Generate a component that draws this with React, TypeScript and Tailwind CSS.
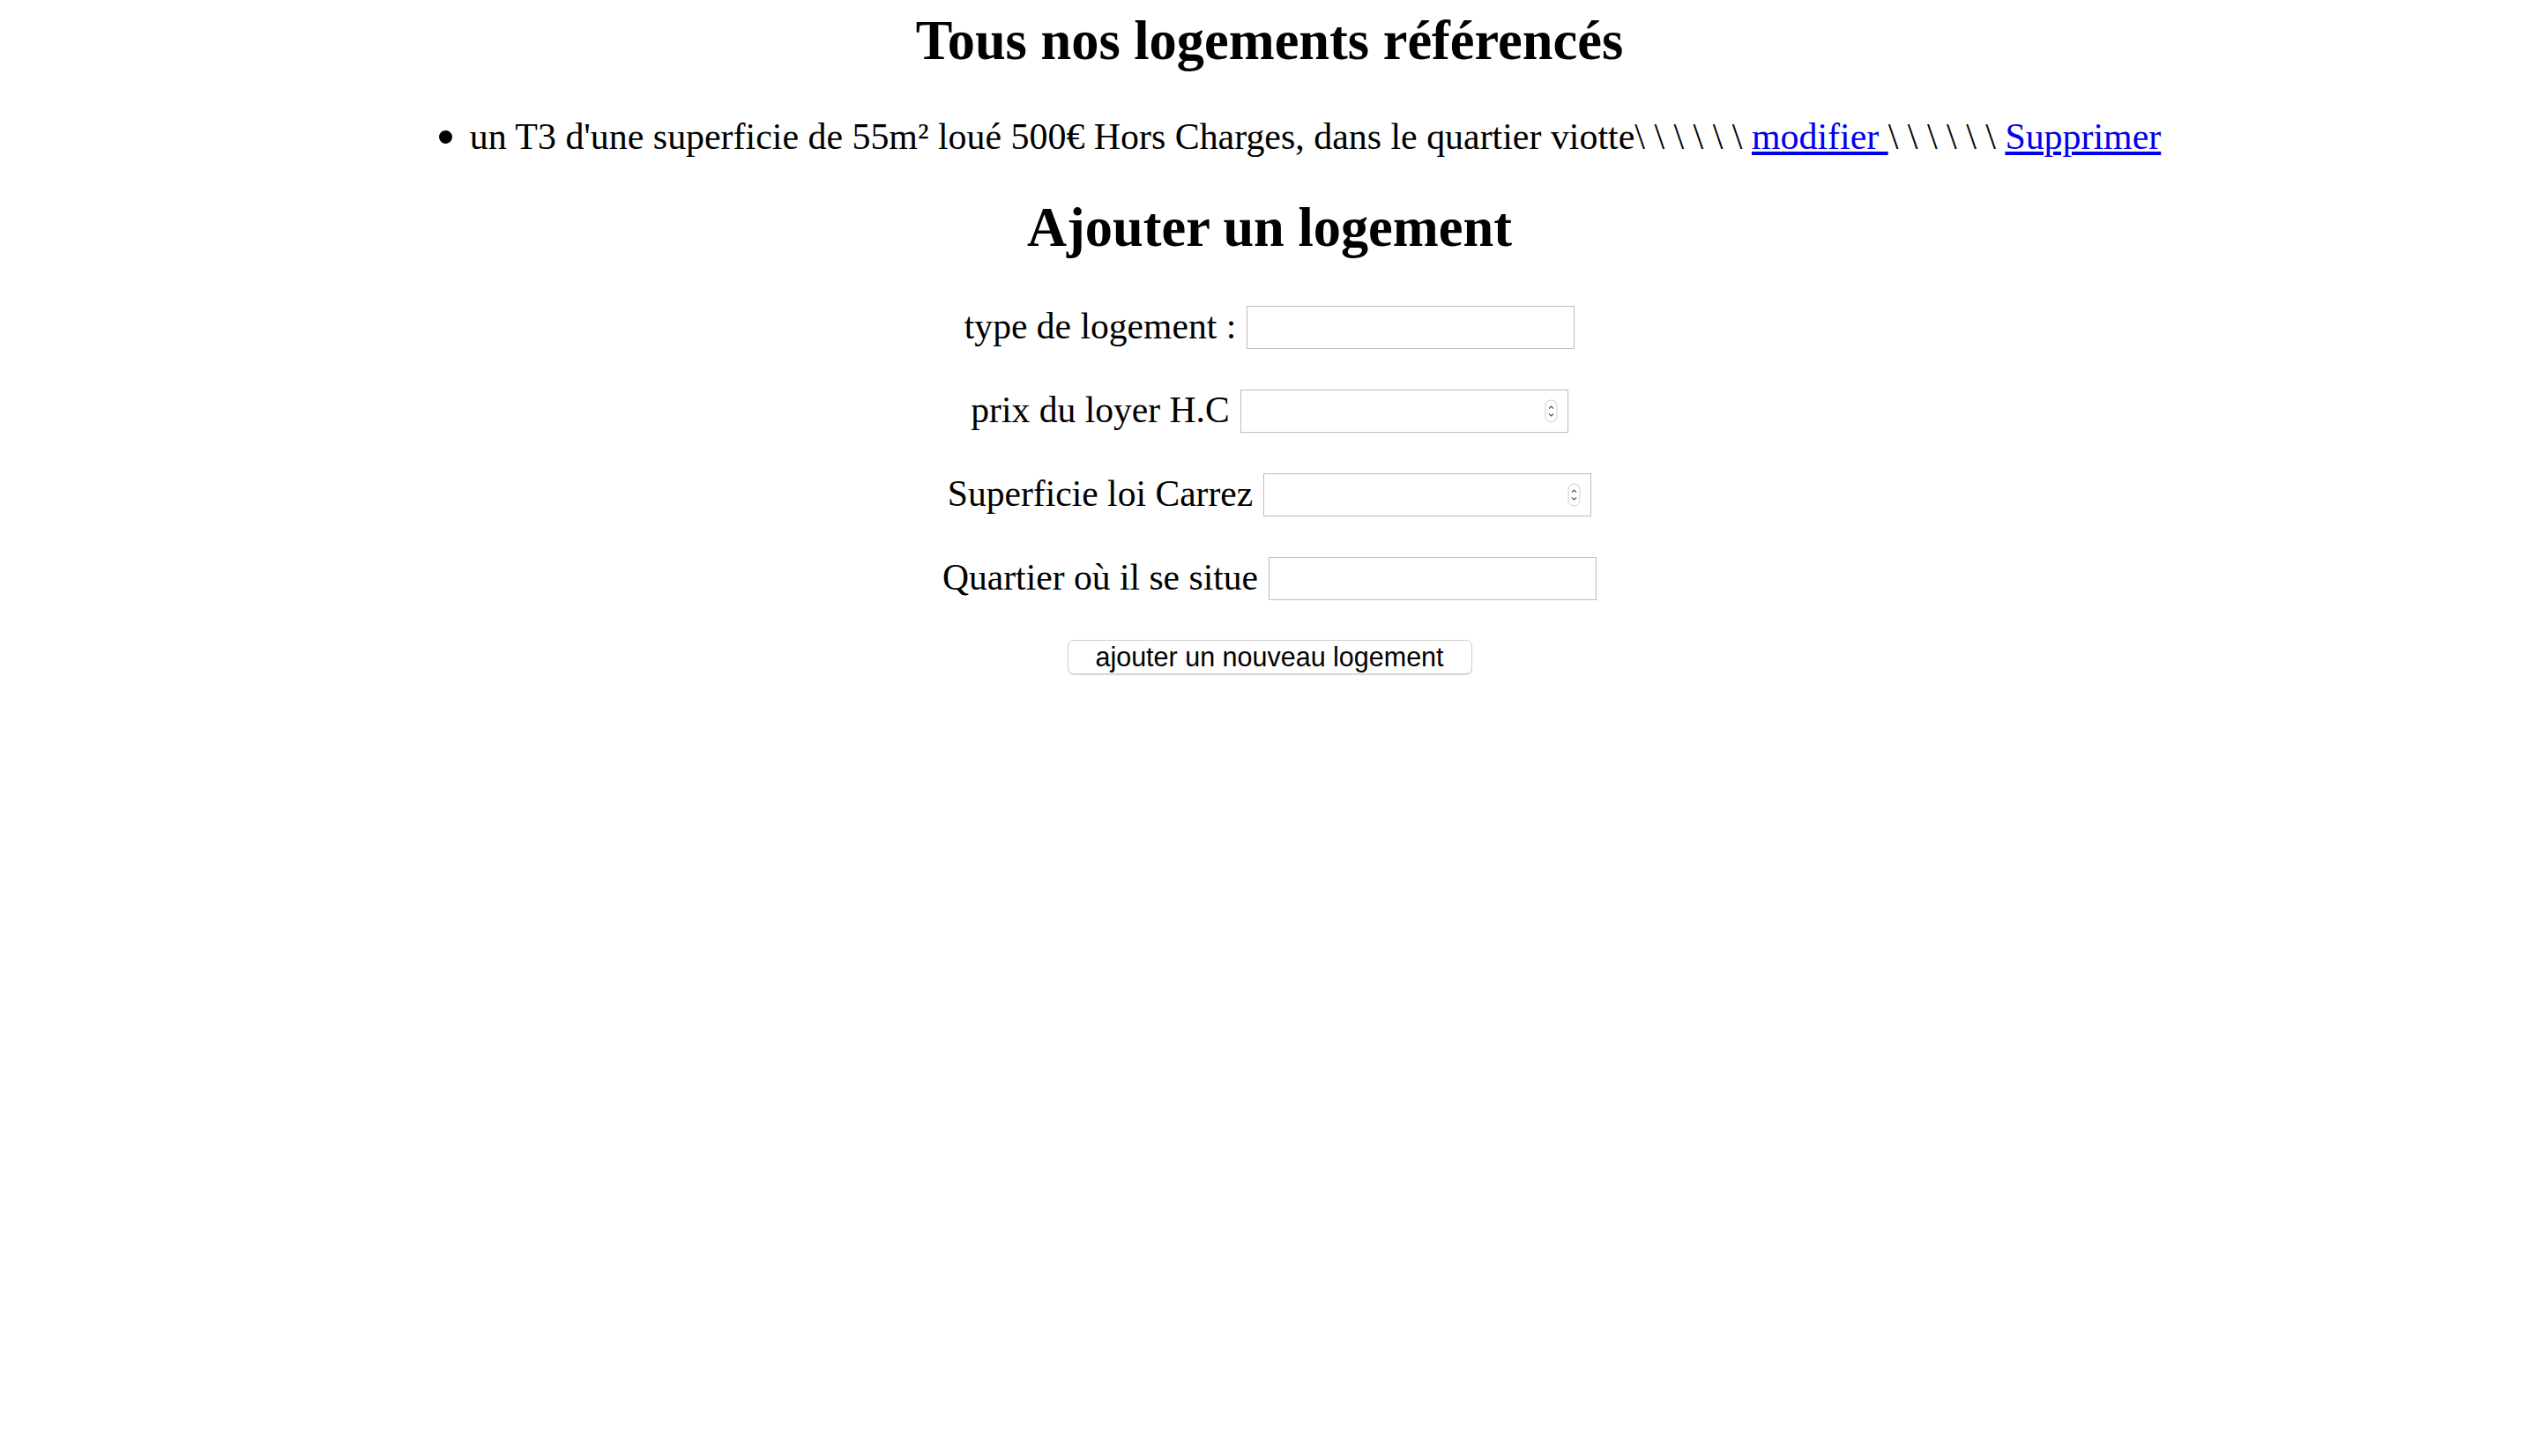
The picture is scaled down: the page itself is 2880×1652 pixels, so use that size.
const rows = [
  { label: "type de logement :", number: false },
  { label: "prix du loyer H.C", number: true },
  { label: "Superficie loi Carrez", number: true },
  { label: "Quartier où il se situe", number: false },
];

function Spinner() {
  return (
    <svg width="15" height="27" viewBox="0 0 15 27" className="shrink-0">
      <rect x="1" y="1" width="13" height="25" rx="6.5" fill="#fff" stroke="#cfcfcf" strokeWidth="1" />
      <path d="M5 10.5 L7.5 8 L10 10.5" fill="none" stroke="#555" strokeWidth="1.2" />
      <path d="M5 16.5 L7.5 19 L10 16.5" fill="none" stroke="#555" strokeWidth="1.2" />
    </svg>
  );
}

export default function App() {
  return (
    <div className="min-h-screen bg-white pt-[10px] text-center text-black font-['Liberation_Serif','Times_New_Roman',serif]">
      <h1 className="m-0 text-[62.4px] font-bold leading-[72px]">Tous nos logements référencés</h1>

      <ul className="mt-[49px] pl-[104px] text-[41.9px] leading-[48px]">
        <li>
          <span className="ml-[-35px] mr-[20px] inline-block h-[15px] w-[15px] rounded-full bg-black align-[6px]" />
          un T3 d'une superficie de 55m² loué 500€ Hors Charges, dans le quartier viotte\ \ \ \ \ \{" "}
          <a href="#" className="text-[#0000ee] underline">modifier </a>
          \ \ \ \ \ \{" "}
          <a href="#" className="text-[#0000ee] underline">Supprimer</a>
        </li>
      </ul>

      <h2 className="mt-[43px] text-[62.4px] font-bold leading-[72px]">Ajouter un logement</h2>

      <form className="mt-[53px] flex flex-col items-center gap-[46px] text-[41.6px] leading-[44px]">
        {rows.map((row) => (
          <div key={row.label} className="flex items-center justify-center gap-[12px]">
            <label className="pb-[4px]">{row.label}</label>
            <div className="flex h-[49px] w-[372px] items-center justify-end border border-[#bdbdbd] bg-white pr-[11px]">
              {row.number && <Spinner />}
            </div>
          </div>
        ))}
        <button
          type="button"
          className="mt-[-1px] h-[39px] w-[459px] rounded-[7px] border border-[#d0d0d0] bg-white text-[30.5px] leading-none text-black shadow-[0_1px_1px_rgba(0,0,0,0.15)] font-['Liberation_Sans',Arial,sans-serif]"
        >
          ajouter un nouveau logement
        </button>
      </form>
    </div>
  );
}
